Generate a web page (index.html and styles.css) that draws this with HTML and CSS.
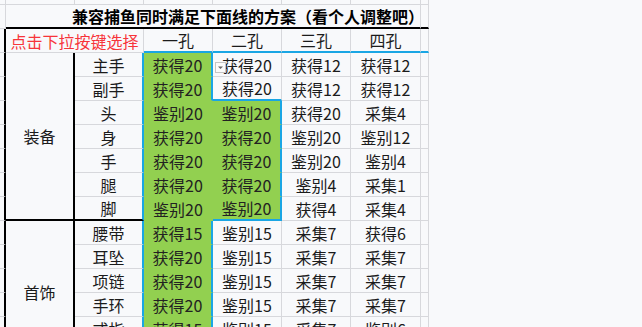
FILE: index.html
```html
<!DOCTYPE html>
<html lang="zh-CN">
<head>
<meta charset="utf-8">
<title>兼容捕鱼方案</title>
<link rel="stylesheet" href="styles.css">
</head>
<body>
<div class="sheet">
  <!-- top strip -->
  <div class="c"></div><div class="c"></div><div class="c"></div><div class="c"></div><div class="c"></div><div class="c"></div><div class="c"></div><div class="c"></div>
  <!-- title -->
  <div class="c"></div>
  <div class="c title">兼容捕鱼同时满足下面线的方案（看个人调整吧）</div>
  <div class="c title-end"></div>
  <!-- header -->
  <div class="c edge"></div>
  <div class="c hint">点击下拉按键选择</div>
  <div class="c hd">一孔</div><div class="c hd">二孔</div><div class="c hd">三孔</div><div class="c hd">四孔</div><div class="c hd"></div>

  <!-- 主手 -->
  <div class="c edge"></div>
  <div class="c grp grp-eq">装备</div>
  <div class="c lbl">主手</div>
  <div class="c g g-end">获得20</div>
  <div class="c dcell">获得20<span class="dd"><svg viewBox="0 0 9 9" width="9" height="9"><path d="M2 3.5 L7 3.5 L4.5 6 Z" fill="#666"/></svg></span></div>
  <div class="c">获得12</div><div class="c">获得12</div><div class="c"></div>
  <!-- 副手 -->
  <div class="c edge"></div>
  <div class="c lbl">副手</div>
  <div class="c g g-end">获得20</div>
  <div class="c sel-b">获得20</div>
  <div class="c">获得12</div><div class="c">获得12</div><div class="c"></div>
  <!-- 头 -->
  <div class="c edge"></div>
  <div class="c lbl">头</div>
  <div class="c g">鉴别20</div>
  <div class="c g g-end">鉴别20</div>
  <div class="c">获得20</div><div class="c">采集4</div><div class="c"></div>
  <!-- 身 -->
  <div class="c edge"></div>
  <div class="c lbl">身</div>
  <div class="c g">获得20</div>
  <div class="c g g-end">获得20</div>
  <div class="c">鉴别20</div><div class="c">鉴别12</div><div class="c"></div>
  <!-- 手 -->
  <div class="c edge"></div>
  <div class="c lbl">手</div>
  <div class="c g">获得20</div>
  <div class="c g g-end">获得20</div>
  <div class="c">鉴别20</div><div class="c">鉴别4</div><div class="c"></div>
  <!-- 腿 -->
  <div class="c edge"></div>
  <div class="c lbl">腿</div>
  <div class="c g">获得20</div>
  <div class="c g g-end">获得20</div>
  <div class="c">鉴别4</div><div class="c">采集1</div><div class="c"></div>
  <!-- 脚 -->
  <div class="c edge"></div>
  <div class="c lbl lbl-last">脚</div>
  <div class="c g">鉴别20</div>
  <div class="c g g-end g-last">鉴别20</div>
  <div class="c">获得4</div><div class="c">采集4</div><div class="c"></div>

  <!-- 腰带 -->
  <div class="c edge"></div>
  <div class="c grp grp-acc">首饰</div>
  <div class="c lbl">腰带</div>
  <div class="c g g-end">获得15</div>
  <div class="c">鉴别15</div><div class="c">采集7</div><div class="c">获得6</div><div class="c"></div>
  <!-- 耳坠 -->
  <div class="c edge"></div>
  <div class="c lbl">耳坠</div>
  <div class="c g g-end">获得20</div>
  <div class="c">鉴别15</div><div class="c">采集7</div><div class="c">采集7</div><div class="c"></div>
  <!-- 项链 -->
  <div class="c edge"></div>
  <div class="c lbl">项链</div>
  <div class="c g g-end">获得20</div>
  <div class="c">鉴别15</div><div class="c">采集7</div><div class="c">采集7</div><div class="c"></div>
  <!-- 手环 -->
  <div class="c edge"></div>
  <div class="c lbl">手环</div>
  <div class="c g g-end">获得20</div>
  <div class="c">鉴别15</div><div class="c">采集7</div><div class="c">采集7</div><div class="c"></div>
  <!-- 戒指 -->
  <div class="c edge"></div>
  <div class="c lbl">戒指</div>
  <div class="c g g-end">获得15</div>
  <div class="c">鉴别15</div><div class="c">采集7</div><div class="c">鉴别6</div><div class="c"></div>
  <!-- extra -->
  <div class="c edge"></div>
  <div class="c lbl"></div>
  <div class="c g g-end"></div>
  <div class="c"></div><div class="c"></div><div class="c"></div><div class="c"></div>
</div>
</body>
</html>
```

FILE: styles.css
```css
:root {
  --grid: #d7d8dc;
  --green: #92d050;
  --cyan: #1aa6e4;
  --bg: #f8f9fb;
}
html, body {
  margin: 0;
  padding: 0;
  background: var(--bg);
  overflow: hidden;
  height: 327px;
}
body {
  font-family: "Noto Sans CJK SC", "Noto Sans", sans-serif;
  font-size: 16px;
  color: #1b1b1b;
}
.sheet {
  display: grid;
  grid-template-columns: 6px 69px 69px 69px 69px 69px 70px 8px;
  grid-template-rows: 5px repeat(16, 24px);
  width: 429px;
}
.c {
  box-sizing: border-box;
  border-right: 1px solid var(--grid);
  border-bottom: 1px solid var(--grid);
  display: flex;
  align-items: center;
  justify-content: center;
  white-space: nowrap;
  overflow: hidden;
  line-height: 1;
}
.title {
  grid-column: span 6;
  justify-content: flex-start;
  padding-left: 66px;
  font-weight: bold;
  color: #000;
  border-bottom: 2px solid #000;
  overflow: visible;
}
.title-end {
  border-bottom: 2px solid #000;
}
.edge {
  border-right: 2px solid #000;
}
.hint {
  grid-column: span 2;
  color: #f7343a;
}
.hd {
  border-bottom: 2px solid var(--cyan);
}
.grp {
  border-right: 2px solid #000;
  border-bottom: 2px solid #000;
}
.grp-eq { grid-row: span 7; }
.grp-acc { grid-row: span 6; }
.lbl {
  border-right: 2px solid var(--cyan);
}
.lbl-last {
  border-bottom: 2px solid #000;
}
.g {
  background: var(--green);
  border-color: var(--green);
  color: #222;
}
.g-end {
  border-right: 2px solid var(--cyan);
}
.g-last {
  border-bottom: 2px solid var(--cyan);
}
.sel-b {
  border-bottom: 2px solid var(--cyan);
}
.dcell {
  position: relative;
  overflow: visible;
}
.dd {
  position: absolute;
  left: 2px;
  top: 9px;
  width: 11px;
  height: 11px;
  box-sizing: border-box;
  border: 1px solid #c4c4c4;
  background: #fbfbfb;
  display: flex;
  align-items: center;
  justify-content: center;
}
```
